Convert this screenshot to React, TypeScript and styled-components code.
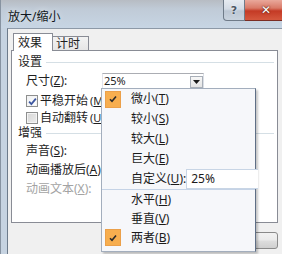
import React from "react";
import styled, { createGlobalStyle } from "styled-components";

const GlobalStyle = createGlobalStyle`
  html, body {
    margin: 0;
    padding: 0;
  }
  body {
    width: 282px;
    height: 254px;
    overflow: hidden;
    font-family: "Noto Sans", "Noto Sans CJK SC", sans-serif;
    font-size: 12px;
    color: #1e1e1e;
  }
`;

const Screen = styled.div`
  position: relative;
  width: 282px;
  height: 254px;
  overflow: hidden;
`;

const Window = styled.div`
  width: 290px;
  height: 262px;
  display: flex;
  flex-direction: column;
  background: #c6d3e1;
  border-left: 1px solid #8793a1;
  box-sizing: border-box;
`;

const TitleBar = styled.div`
  height: 28px;
  flex: none;
  display: flex;
  align-items: flex-start;
  padding-left: 7px;
  background: linear-gradient(180deg, #b7bcc3 0, #c0cbd7 9px, #c7d5e4 28px);
`;

const Title = styled.div`
  margin-top: 9px;
  line-height: 16px;
  color: #101820;
  text-shadow: 0 0 6px rgba(255, 255, 255, 0.7);
`;

const Spacer = styled.div`
  flex: 1;
`;

const CaptionButton = styled.div<{ $close?: boolean }>`
  width: ${(p) => (p.$close ? 43 : 22)}px;
  height: 21px;
  box-sizing: border-box;
  display: flex;
  align-items: center;
  justify-content: center;
  border: 1px solid ${(p) => (p.$close ? "#7a2d24" : "#6f7b89")};
  border-top: 0;
  border-left: ${(p) => (p.$close ? 0 : "1px solid #6f7b89")};
  border-radius: ${(p) => (p.$close ? "0 0 4px 0" : "0 0 0 4px")};
  background: ${(p) =>
    p.$close
      ? "linear-gradient(180deg, #e9a89b 0, #d97a68 40%, #c43a25 55%, #d5583e 100%)"
      : "linear-gradient(180deg, #e6ebf1 0, #d3dbe5 45%, #bcc7d4 55%, #c9d3de 100%)"};
  color: ${(p) => (p.$close ? "#ffffff" : "#4a5563")};
  font-family: "DejaVu Sans", sans-serif;
  font-weight: bold;
  font-size: ${(p) => (p.$close ? 12 : 11)}px;
  text-shadow: ${(p) =>
    p.$close ? "0 0 2px #5a1a10, 0 0 1px #5a1a10" : "0 0 2px #ffffff"};
`;

const CaptionGap = styled.div`
  width: 2px;
`;

const Body = styled.div`
  flex: 1;
  display: flex;
  padding-left: 6px;
`;

const Client = styled.div`
  flex: 1;
  display: flex;
  flex-direction: column;
  background: #f0f0f0;
  border-left: 1px solid #6d7b8b;
  border-top: 1px solid #8d99a7;
  padding: 4px 0 0 3px;
`;

const Tabs = styled.div`
  display: flex;
  align-items: flex-end;
  height: 17px;
  padding-left: 2px;
`;

const Tab = styled.div<{ $active?: boolean }>`
  position: relative;
  z-index: 1;
  box-sizing: border-box;
  width: ${(p) => (p.$active ? 40 : 36)}px;
  height: ${(p) => (p.$active ? 18 : 14)}px;
  margin-bottom: ${(p) => (p.$active ? -1 : 0)}px;
  border: 1px solid #898c95;
  border-bottom: 0;
  border-left-width: ${(p) => (p.$active ? 1 : 0)}px;
  background: ${(p) =>
    p.$active ? "#ffffff" : "linear-gradient(180deg, #f3f3f3 0, #e6e6e6 100%)"};
  padding-left: ${(p) => (p.$active ? 4 : 3)}px;
  padding-top: ${(p) => (p.$active ? 2 : 0)}px;
  line-height: 14px;
  font-size: 12px;
`;

const Panel = styled.div`
  box-sizing: border-box;
  width: 267px;
  height: 173px;
  border: 1px solid #898c95;
  background: #ffffff;
  display: flex;
  flex-direction: column;
`;

const GroupHead = styled.div<{ $mt: number }>`
  display: flex;
  align-items: center;
  height: 14px;
  line-height: 14px;
  padding-left: 6px;
  margin-top: ${(p) => p.$mt}px;

  &::after {
    content: "";
    flex: 1;
    height: 1px;
    margin: 1px 3px 0 4px;
    background: #d5dfe5;
  }
`;

const Row = styled.div<{ $h: number; $mt?: number; $muted?: boolean }>`
  display: flex;
  align-items: center;
  height: ${(p) => p.$h}px;
  margin-top: ${(p) => p.$mt ?? 0}px;
  padding-left: 14px;
  line-height: 14px;
  white-space: nowrap;
  color: ${(p) => (p.$muted ? "#a3a3a3" : "#1e1e1e")};
`;

const FieldLabel = styled.span`
  width: 76px;
  flex: none;
`;

const Combo = styled.div`
  box-sizing: border-box;
  width: 102px;
  height: 16px;
  display: flex;
  align-items: flex-end;
  border: 1px solid #abadb3;
  border-color: #abadb3 #dbdfe6 #e3e9ef #e2e3ea;
  background: #ffffff;
  font-size: 11px;
  line-height: 14px;
  padding-left: 1px;
`;

const ComboText = styled.span`
  align-self: center;
`;

const ComboArrow = styled.span`
  box-sizing: border-box;
  width: 13px;
  height: 12px;
  margin: 0 0 0 auto;
  display: flex;
  align-items: center;
  justify-content: center;
  border: 1px solid #a9afb8;
  background: linear-gradient(180deg, #f7f7f7 0, #e4e4e4 100%);
`;

const Check = styled.span<{ $on?: boolean }>`
  box-sizing: border-box;
  width: 12px;
  height: 12px;
  flex: none;
  display: flex;
  align-items: center;
  justify-content: center;
  border: 1px solid #8e8f8f;
  background: ${(p) =>
    p.$on
      ? "linear-gradient(135deg, #eef0f3 0, #ffffff 100%)"
      : "linear-gradient(135deg, #d6d6d6 0, #ececec 100%)"};
  box-shadow: inset 0 0 0 1px #f4f4f4;
  margin-right: 2px;
`;

const Small = styled.span`
  font-size: 11px;
  margin-left: 2px;
`;

const Footer = styled.div`
  width: 267px;
  display: flex;
  justify-content: flex-end;
  margin-top: 9px;
`;

const Button = styled.div`
  box-sizing: border-box;
  width: 75px;
  height: 17px;
  border: 1px solid #8a8a8a;
  border-radius: 3px;
  background: linear-gradient(180deg, #f2f2f2 0, #ebebeb 45%, #dddddd 55%, #cfcfcf 100%);
  text-align: center;
  line-height: 15px;
`;

const Menu = styled.div`
  position: absolute;
  left: 101px;
  top: 88px;
  width: 155px;
  height: 164px;
  box-sizing: border-box;
  border: 1px solid #a3aebd;
  border-right-color: #5f6f86;
  background: #f6f7fa;
  box-shadow: 2px 2px 2px rgba(0, 0, 0, 0.22);
  display: flex;
  flex-direction: column;
`;

const MenuItem = styled.div<{ $h: number }>`
  display: flex;
  align-items: center;
  height: ${(p) => p.$h}px;
  line-height: 14px;
  color: #1b1b1b;
`;

const MenuLabel = styled.span`
  flex: none;
  white-space: nowrap;
`;

const MenuCheck = styled.span<{ $on?: boolean }>`
  box-sizing: border-box;
  flex: none;
  width: 16px;
  height: 17px;
  margin-left: 3px;
  margin-right: 10px;
  display: flex;
  align-items: center;
  justify-content: center;
  background: ${(p) => (p.$on ? "#f7ae4f" : "transparent")};
  border: 1px solid ${(p) => (p.$on ? "#eba04a" : "transparent")};
`;

const MenuInput = styled.div`
  box-sizing: border-box;
  flex: none;
  width: 72px;
  height: 20px;
  margin-left: auto;
  border: 1px solid #c8d5e5;
  border-right: 0;
  background: #ffffff;
  padding-left: 4px;
  line-height: 18px;
`;

const Separator = styled.div`
  height: 1px;
  background: #c5d3e6;
`;

const Tick = ({ color, size }: { color: string; size: number }) => (
  <svg width={size} height={size} viewBox="0 0 8 8">
    <path d="M1 4.2 L3 6.3 L7 1.5" fill="none" stroke={color} strokeWidth="1.6" />
  </svg>
);

const menuSizes = [
  { text: "微小", key: "T", on: true },
  { text: "较小", key: "S" },
  { text: "较大", key: "L" },
  { text: "巨大", key: "E" },
];

const menuAxes = [
  { text: "水平", key: "H" },
  { text: "垂直", key: "V" },
  { text: "两者", key: "B", on: true },
];

export default function App() {
  return (
    <Screen>
      <GlobalStyle />
      <Window>
        <TitleBar>
          <Title>放大/缩小</Title>
          <Spacer />
          <CaptionButton>?</CaptionButton>
          <CaptionButton $close>✕</CaptionButton>
          <CaptionGap />
        </TitleBar>
        <Body>
          <Client>
            <Tabs>
              <Tab $active>效果</Tab>
              <Tab>计时</Tab>
            </Tabs>
            <Panel>
              <GroupHead $mt={4}>设置</GroupHead>
              <Row $h={16} $mt={4}>
                <FieldLabel>
                  尺寸(<u>Z</u>):
                </FieldLabel>
                <Combo>
                  <ComboText>25%</ComboText>
                  <ComboArrow>
                    <svg width="7" height="4" viewBox="0 0 7 4">
                      <path d="M0 0 H7 L3.5 4 Z" fill="#1a1a1a" />
                    </svg>
                  </ComboArrow>
                </Combo>
              </Row>
              <Row $h={18} $mt={3}>
                <Check $on>
                  <Tick color="#3d57a0" size={9} />
                </Check>
                <span>
                  平稳开始<Small>(<u>M</u>)</Small>
                </span>
              </Row>
              <Row $h={16}>
                <Check />
                <span>
                  自动翻转<Small>(<u>U</u>)</Small>
                </span>
              </Row>
              <GroupHead $mt={0}>增强</GroupHead>
              <Row $h={18} $mt={2}>
                <span>
                  声音(<u>S</u>):
                </span>
              </Row>
              <Row $h={18} $mt={1}>
                <span>
                  动画播放后(<u>A</u>):
                </span>
              </Row>
              <Row $h={18} $mt={1} $muted>
                <span>
                  动画文本(<u>X</u>):
                </span>
              </Row>
            </Panel>
            <Footer>
              <Button>关闭</Button>
            </Footer>
          </Client>
        </Body>
      </Window>

      <Menu>
        {menuSizes.map((m) => (
          <MenuItem key={m.key} $h={20}>
            <MenuCheck $on={m.on}>{m.on && <Tick color="#2a2a2a" size={8} />}</MenuCheck>
            <MenuLabel>
              {m.text}(<u>{m.key}</u>)
            </MenuLabel>
          </MenuItem>
        ))}
        <MenuItem $h={20}>
          <MenuCheck />
          <MenuLabel>
            自定义(<u>U</u>):
          </MenuLabel>
          <MenuInput>25%</MenuInput>
        </MenuItem>
        <Separator />
        {menuAxes.map((m) => (
          <MenuItem key={m.key} $h={19}>
            <MenuCheck $on={m.on}>{m.on && <Tick color="#2a2a2a" size={8} />}</MenuCheck>
            <MenuLabel>
              {m.text}(<u>{m.key}</u>)
            </MenuLabel>
          </MenuItem>
        ))}
      </Menu>
    </Screen>
  );
}
